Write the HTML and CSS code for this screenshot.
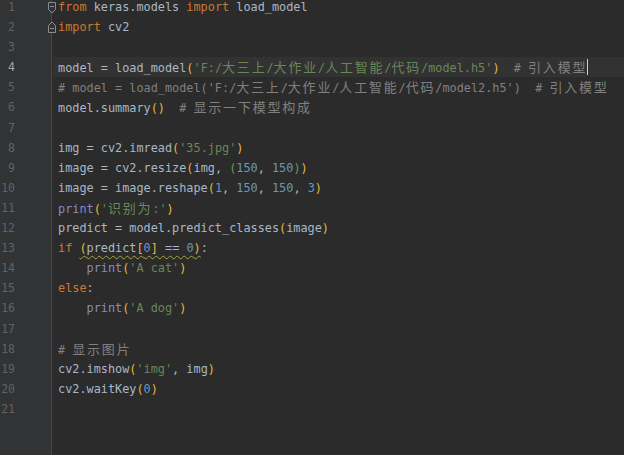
FILE: index.html
```html
<!DOCTYPE html>
<html>
<head>
<meta charset="utf-8">
<link rel="stylesheet" href="styles.css">
</head>
<body>
<div class="editor">
  <div class="gutter">
    <div class="ln">1</div><div class="ln">2</div><div class="ln">3</div><div class="ln cur">4</div><div class="ln">5</div><div class="ln">6</div><div class="ln">7</div><div class="ln">8</div><div class="ln">9</div><div class="ln">10</div><div class="ln">11</div><div class="ln">12</div><div class="ln">13</div><div class="ln">14</div><div class="ln">15</div><div class="ln">16</div><div class="ln">17</div><div class="ln">18</div><div class="ln">19</div><div class="ln">20</div><div class="ln">21</div>
    <svg class="fold f1" width="10" height="14" viewBox="0 0 10 14"><path d="M1.5 1.5 H8.5 V8.5 L5 12 L1.5 8.5 Z" fill="#313335" stroke="#8a8d90" stroke-width="1"/><path d="M3 5.5 H7" stroke="#8a8d90" stroke-width="1"/></svg>
    <svg class="fold f2" width="10" height="14" viewBox="0 0 10 14"><path d="M1.5 12.5 H8.5 V5.5 L5 2 L1.5 5.5 Z" fill="#313335" stroke="#8a8d90" stroke-width="1"/><path d="M3 8.5 H7" stroke="#8a8d90" stroke-width="1"/></svg>
  </div>
  <div class="code">
<div class="line"><span class="kw">from</span> keras.models <span class="kw">import</span> load_model</div>
<div class="line"><span class="kw">import</span> cv2</div>
<div class="line"></div>
<div class="line current">model = load_model<span class="p1">(</span><span class="str">'F:/<span class="cn">大三上</span>/<span class="cn">大作业</span>/<span class="cn">人工智能</span>/<span class="cn">代码</span>/model.h5'</span><span class="p1">)</span>  <span class="cm"># <span class="cn">引入模型</span></span><span class="caret"></span></div>
<div class="line"><span class="cm"># model = load_model('F:/<span class="cn">大三上</span>/<span class="cn">大作业</span>/<span class="cn">人工智能</span>/<span class="cn">代码</span>/model2.h5')  # <span class="cn">引入模型</span></span></div>
<div class="line">model.summary<span class="p1">()</span>  <span class="cm"># <span class="cn">显示一下模型构成</span></span></div>
<div class="line"></div>
<div class="line">img = cv2.imread<span class="p1">(</span><span class="str">'35.jpg'</span><span class="p1">)</span></div>
<div class="line">image = cv2.resize<span class="p1">(</span>img, <span class="p2">(</span><span class="num">150</span>, <span class="num">150</span><span class="p2">)</span><span class="p1">)</span></div>
<div class="line">image = image.reshape<span class="p1">(</span><span class="num">1</span>, <span class="num">150</span>, <span class="num">150</span>, <span class="num">3</span><span class="p1">)</span></div>
<div class="line"><span class="bi">print</span><span class="p1">(</span><span class="str">'<span class="cn">识别为</span>:'</span><span class="p1">)</span></div>
<div class="line">predict = model.predict_classes<span class="p1">(</span>image<span class="p1">)</span></div>
<div class="line"><span class="kw">if</span> <span class="warn"><span class="p1">(</span>predict<span class="p1">[</span><span class="num">0</span><span class="p1">]</span> == <span class="num">0</span><span class="p1">)</span></span>:</div>
<div class="line">    <span class="bi">print</span><span class="p1">(</span><span class="str">'A cat'</span><span class="p1">)</span></div>
<div class="line"><span class="kw">else</span>:</div>
<div class="line">    <span class="bi">print</span><span class="p1">(</span><span class="str">'A dog'</span><span class="p1">)</span></div>
<div class="line"></div>
<div class="line"><span class="cm"># <span class="cn">显示图片</span></span></div>
<div class="line">cv2.imshow<span class="p1">(</span><span class="str">'img'</span>, img<span class="p1">)</span></div>
<div class="line">cv2.waitKey<span class="p1">(</span><span class="num">0</span><span class="p1">)</span></div>
<div class="line"></div>
  </div>
</div>
</body>
</html>
```
FILE: styles.css
```css
html, body {
  margin: 0;
  padding: 0;
  background: #2b2b2b;
  height: 100%;
  overflow: hidden;
}
.editor {
  display: flex;
  min-height: 100vh;
  font-family: "DejaVu Sans Mono", "Noto Sans CJK SC", monospace;
  font-size: 11.85px;
}
.gutter {
  position: relative;
  width: 51px;
  flex: none;
  background: #313335;
  border-right: 1px solid #45484a;
  margin-right: 1px;
}
.gutter .ln:first-child { margin-top: -3px; }
.ln {
  width: 15px;
  height: 20.1px;
  line-height: 20.1px;
  text-align: right;
  color: #606366;
  font-size: 11.5px;
}
.ln.cur { color: #a4a3a3; }
.fold {
  position: absolute;
  left: 47px;
}
.f1 { top: 1px; }
.f2 { top: 20px; }
.code {
  flex: 1;
  color: #a9b7c6;
  margin-top: -3px;
}
.line {
  height: 20.1px;
  line-height: 20.1px;
  white-space: pre;
  padding-left: 5px;
}
.line.current { background: #323232; }
.kw { color: #cc7832; }
.str { color: #6a8759; }
.num { color: #6897bb; }
.cm { color: #808080; }
.bi { color: #8888c6; }
.p1 { color: #e8ba36; }
.p2 { color: #54a857; }
.cn {
  font-family: "Noto Sans CJK SC", sans-serif;
  font-size: 13px;
  letter-spacing: 1.8px;
}
.warn {
  text-decoration: underline wavy #a7a441;
  text-decoration-thickness: 1px;
  text-underline-offset: 3px;
}
.caret {
  display: inline-block;
  width: 1px;
  height: 16px;
  background: #d0d0d0;
  vertical-align: -3px;
}
```
